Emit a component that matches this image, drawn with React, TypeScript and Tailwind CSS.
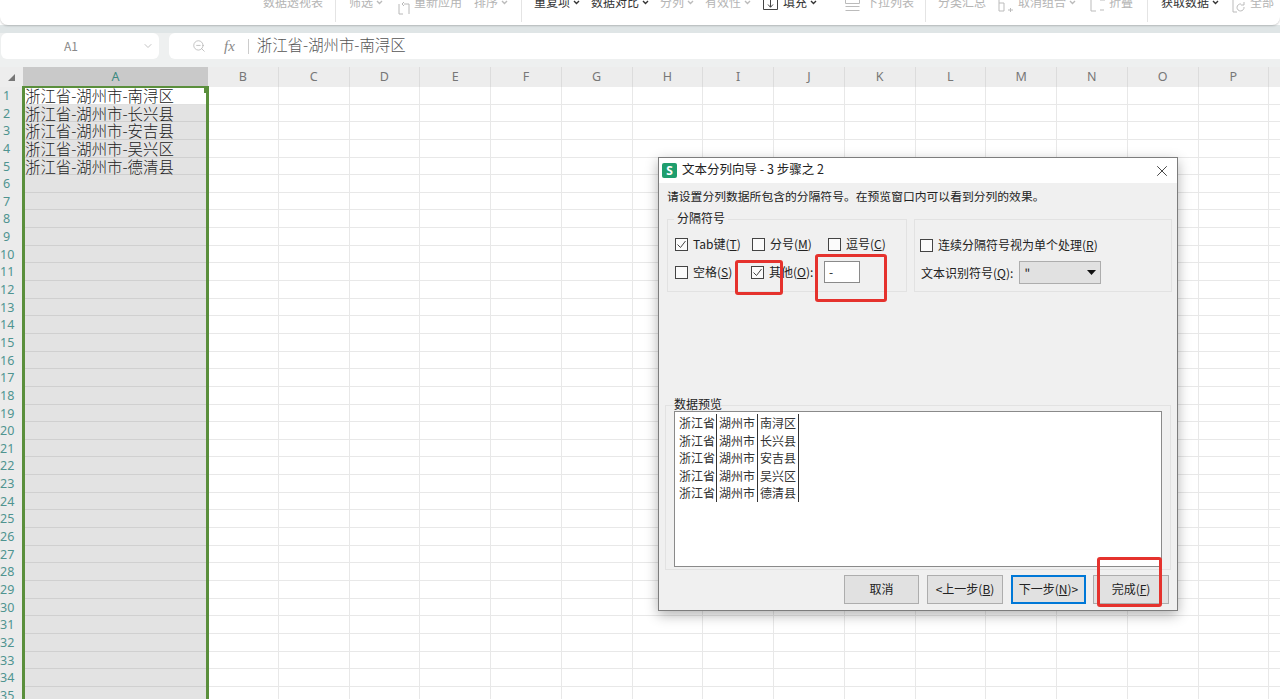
import React from "react";
import { ChevronDown, ZoomOut, X } from "lucide-react";

const FONT = { fontFamily: '"Noto Sans CJK SC", "Noto Sans", sans-serif' };
const columns = ["B", "C", "D", "E", "F", "G", "H", "I", "J", "K", "L", "M", "N", "O", "P", ""];
const cities = ["浙江省-湖州市-南浔区", "浙江省-湖州市-长兴县", "浙江省-湖州市-安吉县", "浙江省-湖州市-吴兴区", "浙江省-湖州市-德清县"];
const preview = [
  ["浙江省", "湖州市", "南浔区"],
  ["浙江省", "湖州市", "长兴县"],
  ["浙江省", "湖州市", "安吉县"],
  ["浙江省", "湖州市", "吴兴区"],
  ["浙江省", "湖州市", "德清县"],
];
const rows = Array.from({ length: 35 }, (_, i) => i + 1);

function Sep({ ml }: { ml: string }) {
  return <div className={`${ml} h-[22px] w-px shrink-0 bg-[#e4e4e4]`} />;
}

function Chev({ dark }: { dark?: boolean }) {
  return (
    <svg width="7" height="5" viewBox="0 0 7 5" className={`ml-[3px] shrink-0 ${dark ? "text-[#333]" : "text-[#bbb]"}`} fill="none" stroke="currentColor" strokeWidth="1.4">
      <path d="M1 1l2.5 2.5L6 1" />
    </svg>
  );
}

function Check({ checked }: { checked?: boolean }) {
  return (
    <span className="flex h-[13px] w-[13px] shrink-0 items-center justify-center border border-[#444] bg-[#fbfbfb]">
      {checked && (
        <svg width="11" height="11" viewBox="0 0 11 11" fill="none" stroke="#444" strokeWidth="1">
          <path d="M1.5 5.5l3 3 5-6.5" />
        </svg>
      )}
    </span>
  );
}

function Option({ checked, label, hot, tail, className }: { checked?: boolean; label: string; hot: string; tail?: string; className: string }) {
  return (
    <div className={`flex shrink-0 items-center gap-[5px] whitespace-nowrap ${className}`}>
      <Check checked={checked} />
      <span>
        {label}(<span className="underline">{hot}</span>){tail}
      </span>
    </div>
  );
}

function Btn({ children, className }: { children: React.ReactNode; className: string }) {
  return <button className={`flex h-[29px] items-center justify-center pb-[2px] text-[12px] text-[#222] ${className}`}>{children}</button>;
}

export default function App() {
  return (
    <div className="relative h-[699px] w-[1280px] overflow-hidden bg-white text-[#333]" style={FONT}>
      {/* ribbon */}
      <div className="relative z-10 flex h-[25px] items-start overflow-hidden rounded-b-lg bg-white pl-[263px] text-[12px] leading-[16px] whitespace-nowrap text-[#b4b4b4] shadow-[0_1px_2px_rgba(0,0,0,0.2)]">
        <span className="-mt-[6px] w-[60px]">数据透视表</span>
        <Sep ml="ml-[12px]" />
        <span className="-mt-[6px] ml-[13px] flex w-[33px] items-center">筛选<Chev /></span>
        <svg className="-mt-[6px] ml-[15px] shrink-0" width="14" height="24" viewBox="0 0 14 24" fill="none" stroke="#b8b8b8"><path d="M2 10v10h4M12 20v-10H7M7 8l-2 2 2 2" /></svg>
        <span className="-mt-[6px] ml-[3px] w-[48px]">重新应用</span>
        <span className="-mt-[6px] ml-[12px] flex w-[34px] items-center">排序<Chev /></span>
        <Sep ml="ml-[13px]" />
        <span className="-mt-[6px] ml-[12px] flex w-[46px] items-center text-[#333]">重复项<Chev dark /></span>
        <span className="-mt-[6px] ml-[11px] flex w-[57px] items-center text-[#333]">数据对比<Chev dark /></span>
        <span className="-mt-[6px] ml-[12px] flex w-[35px] items-center">分列<Chev /></span>
        <span className="-mt-[6px] ml-[10px] flex w-[45px] items-center">有效性<Chev /></span>
        <svg className="ml-[13px] shrink-0" width="15" height="10" viewBox="0 0 15 10" fill="none" stroke="#444"><path d="M.5 0v9.5h14V0M7.5 0v7M5 4.500l2.500 2.800L10 4.500" /></svg>
        <span className="-mt-[6px] ml-[5px] flex w-[35px] items-center text-[#333]">填充<Chev dark /></span>
        <svg className="ml-[27px] shrink-0" width="15" height="12" viewBox="0 0 15 12" fill="none" stroke="#bbb"><path d="M.5 0v3.500h14V0M.5 6.500h14M.5 10.500h14" /></svg>
        <span className="-mt-[6px] ml-[6px] w-[48px]">下拉列表</span>
        <Sep ml="ml-[11px]" />
        <span className="-mt-[6px] ml-[12px] w-[48px]">分类汇总</span>
        <svg className="ml-[12px] shrink-0" width="17" height="14" viewBox="0 0 17 14" fill="none" stroke="#bbb"><path d="M1 0v11h5V3H1M10 10h5M12.500 8v4" /></svg>
        <span className="-mt-[6px] ml-[3px] flex w-[60px] items-center">取消组合<Chev /></span>
        <svg className="ml-[12px] shrink-0" width="16" height="14" viewBox="0 0 16 14" fill="none" stroke="#bbb"><path d="M1 0v11h5M10 0h5M10 10h4" /></svg>
        <span className="-mt-[6px] ml-[3px] w-[24px]">折叠</span>
        <Sep ml="ml-[14px]" />
        <span className="-mt-[6px] ml-[13px] flex w-[57px] items-center text-[#333]">获取数据<Chev dark /></span>
        <svg className="ml-[14px] shrink-0" width="14" height="13" viewBox="0 0 14 13" fill="none" stroke="#bbb"><path d="M1 0v12h4M9 4a3.500 3.500 0 1 0 3 3M12 2v3H9" /></svg>
        <span className="-mt-[6px] ml-[4px] w-[30px]">全部</span>
      </div>

      {/* formula bar */}
      <div className="h-[8px] bg-[#dfe5e6]" />
      <div className="flex h-[34px] items-start bg-[#eef0f0]">
        <div className="ml-[1px] flex h-[26px] w-[158px] items-center rounded-md bg-white">
          <span className="ml-[63px] text-[12px] text-[#888]">A1</span>
          <ChevronDown className="ml-[64px] h-[12px] w-[12px] text-[#c4c4c4]" />
        </div>
        <div className="ml-[10px] flex h-[26px] flex-1 items-center rounded-l-md bg-white">
          <ZoomOut className="ml-[23px] h-[14px] w-[14px] text-[#aaa]" strokeWidth={1.2} />
          <span className="ml-[18px] text-[15px] leading-none text-[#888] italic" style={{ fontFamily: '"Liberation Serif", serif' }}>fx</span>
          <div className="ml-[13px] h-[15px] w-px bg-[#ccc]" />
          <span className="-mt-[3px] ml-[8px] text-[15.400px] leading-none font-light whitespace-nowrap text-[#555]">浙江省-湖州市-南浔区</span>
        </div>
      </div>

      {/* sheet */}
      <div className="relative">
        <div className="flex h-[20px] bg-[#ededed] text-[12.500px] leading-[20px] text-[#777]" style={{ fontFamily: '"Noto Sans", sans-serif' }}>
          <div className="flex w-[23px] shrink-0 items-center justify-center">
            <svg width="7" height="7" viewBox="0 0 7 7"><path d="M7 0v7H0z" fill="#777" /></svg>
          </div>
          <div className="w-[185px] shrink-0 bg-[#c9c9c9] text-center text-[#3c8a80]">A</div>
          {columns.map((c, i) => (
            <div key={i} className="w-[70.750px] shrink-0 border-r border-[#dcdcdc] text-center">{c}</div>
          ))}
        </div>
        {rows.map((r) => (
          <div key={r} className="flex h-[17.650px]">
            <div className="w-[23px] shrink-0 bg-[#ebebeb] text-[12.500px] leading-[17px] text-[#4f9490]" style={{ fontFamily: '"Noto Sans", sans-serif' }}>
              <div className="w-[13px] text-center">{r}</div>
            </div>
            <div className={`w-[185px] shrink-0 overflow-visible border-b pl-[2px] text-[15.400px] leading-[16px] font-light whitespace-nowrap text-[#222] ${r === 1 ? "border-[#e0e0e0] bg-white" : "border-[#d0d0d0] bg-[#e3e3e3]"}`}>
              {cities[r - 1] ?? ""}
            </div>
            {columns.map((c, i) => (
              <div key={i} className="w-[70.750px] shrink-0 border-r border-b border-[#e8e8e8]" />
            ))}
          </div>
        ))}
        {/* selection */}
        <div className="absolute top-[19px] left-[22px] h-[640px] w-[187px] border-x-[3px] border-t-2 border-[#5a8f3c]" />
        <div className="absolute top-[21px] left-[204px] h-[5px] w-[5px] bg-[#5a8f3c]" />
      </div>

      {/* dialog */}
      <div className="absolute top-[157px] left-[658px] z-20 flex h-[454px] w-[520px] flex-col border border-[#7d7d7d] bg-[#f0f0f0] text-[12px] text-[#222] shadow-[0_4px_12px_rgba(0,0,0,0.3)]">
        <div className="flex h-[25px] shrink-0 items-center bg-white pl-[3px]">
          <span className="flex h-[15px] w-[15px] items-center justify-center rounded-[2px] bg-[#1f9e6e] text-[12px] leading-none font-bold text-white" style={{ fontFamily: '"Noto Sans", sans-serif' }}>S</span>
          <span className="-mt-[3px] ml-[5px] text-[12.500px] whitespace-nowrap">文本分列向导 - 3 步骤之 2</span>
          <X className="mr-[6px] ml-auto h-[18px] w-[18px] text-[#333]" strokeWidth={1.2} />
        </div>
        <div className="mt-[4px] ml-[8px] text-[11.800px] leading-[18px] whitespace-nowrap">请设置分列数据所包含的分隔符号。在预览窗口内可以看到分列的效果。</div>
        <div className="mt-[14px] ml-[8px] flex gap-[7px]">
          <div className="relative h-[73px] w-[240px] border border-[#e2e2e2]">
            <span className="absolute -top-[10px] left-[6px] bg-[#f0f0f0] px-[3px] leading-[16px]">分隔符号</span>
            <div className="mt-[17px] flex pl-[7px] leading-[14px]">
              <Option checked label="Tab键" hot="T" className="w-[77px]" />
              <Option label="分号" hot="M" className="w-[76px]" />
              <Option label="逗号" hot="C" className="w-[60px]" />
            </div>
            <div className="mt-[10px] flex items-center pl-[7px] leading-[14px]">
              <Option label="空格" hot="S" className="w-[76px]" />
              <Option checked label="其他" hot="O" tail=":" className="w-[73px]" />
              <div className="flex h-[22px] w-[36px] items-center border border-[#8a8a8a] bg-white pl-[4px]">-</div>
            </div>
          </div>
          <div className="h-[73px] w-[258px] border border-[#e2e2e2]">
            <Option label="连续分隔符号视为单个处理" hot="R" className="mt-[16px] ml-[5px]" />
            <div className="mt-[7px] ml-[6px] flex items-center">
              <span className="whitespace-nowrap">文本识别符号(<span className="underline">Q</span>):</span>
              <div className="ml-[6px] flex h-[23px] w-[82px] items-center justify-between border border-[#adadad] bg-[#e1e1e1] px-[4px]">
                <span>"</span>
                <svg width="9" height="5" viewBox="0 0 9 5"><path d="M0 0h9L4.500 5z" fill="#111" /></svg>
              </div>
            </div>
          </div>
        </div>
        <div className="relative mt-[113px] ml-[6px] h-[165px] w-[506px] border border-[#e2e2e2]">
          <span className="absolute -top-[9px] left-[8px] leading-[14px] whitespace-nowrap">数据预览</span>
          <div className="mt-[5px] ml-[8px] h-[156px] w-[488px] border border-[#8a8a8a] bg-white pt-[2px] text-[12px] leading-[17.500px] text-[#333]">
            {preview.map((row) => (
              <div key={row[2]} className="flex">
                {row.map((cell, i) => (
                  <span key={i} className={`border-r border-[#333] ${i === 0 ? "w-[42px] pl-[4px]" : "w-[41px] pl-[2px]"}`}>{cell}</span>
                ))}
              </div>
            ))}
          </div>
        </div>
        <div className="mt-[5px] flex gap-[8px] pl-[185px]">
          <Btn className="w-[75px] border border-[#adadad] bg-[#e1e1e1]">取消</Btn>
          <Btn className="w-[76px] border border-[#adadad] bg-[#e1e1e1]"><span>&lt;上一步(<span className="underline">B</span>)</span></Btn>
          <Btn className="w-[75px] border-2 border-[#0078d7] bg-[#e1e1e1]"><span>下一步(<span className="underline">N</span>)&gt;</span></Btn>
          <Btn className="-ml-[1px] w-[76px] border border-[#adadad] bg-[#e1e1e1]"><span>完成(<span className="underline">F</span>)</span></Btn>
        </div>
      </div>

      {/* annotations */}
      <div className="absolute top-[260px] left-[735px] z-30 h-[35px] w-[48px] rounded-[3px] border-[3px] border-[#e5322d]" />
      <div className="absolute top-[254px] left-[815px] z-30 h-[48px] w-[72px] rounded-[3px] border-[3px] border-[#e5322d]" />
      <div className="absolute top-[557px] left-[1097px] z-30 h-[50px] w-[65px] rounded-[3px] border-[3px] border-[#e5322d]" />
    </div>
  );
}
